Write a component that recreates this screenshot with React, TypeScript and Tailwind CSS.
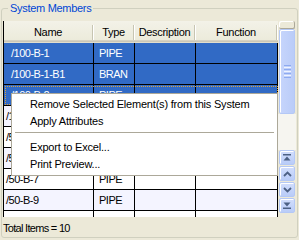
import React from "react";

type Row = { name: string; type: string; sel?: boolean; focus?: boolean };

const rows: Row[] = [
  { name: "/100-B-1", type: "PIPE", sel: true },
  { name: "/100-B-1-B1", type: "BRAN", sel: true },
  { name: "/100-B-2", type: "PIPE", sel: true, focus: true },
  { name: "/100-B-3", type: "PIPE" },
  { name: "/50-B-5", type: "PIPE" },
  { name: "/50-B-6", type: "PIPE" },
  { name: "/50-B-7", type: "PIPE" },
  { name: "/50-B-9", type: "PIPE" },
  { name: "/150-B-9", type: "PIPE" },
];

function ScrollBtn({ children }: { children: React.ReactNode }) {
  return (
    <div className="h-[15px] mb-[1px] mx-[1px] rounded-[2px] border border-[#B4C8F6] bg-gradient-to-b from-[#D2DEFC] to-[#B9CCF8] shadow-[inset_1px_1px_0_#ffffff] flex items-center justify-center">
      {children}
    </div>
  );
}

export default function App() {
  return (
    <div className="w-[299px] h-[240px] bg-[#ECE9D8] px-[1px] pt-[1px] overflow-hidden relative font-['Liberation_Sans',Arial,sans-serif] text-[11px] text-black">
      <fieldset className="m-0 p-0 px-[1px] min-w-0 h-[237px] border border-[#D0D0BF] rounded-[3px]">
        <legend className="ml-[5px] px-[2px] leading-[14px] tracking-[-0.3px] text-[#0046D5]">System Members</legend>

        {/* list */}
        <div className="mt-[6px] h-[196px] flex">
          <div className="w-[275px] shrink-0 border-l border-black flex flex-col">
            {/* header */}
            <div className="h-[22px] shrink-0 flex tracking-[-0.3px] bg-gradient-to-b from-[#F3F2E8] to-[#EBEAD9] shadow-[inset_0_-1px_0_#E2DECD,inset_0_-2px_0_#CBC7B8,inset_0_-3px_0_#D6D2C2]">
              {[
                ["Name", "w-[90px]"],
                ["Type", "w-[41px]"],
                ["Description", "w-[61px]"],
                ["Function", "w-[82px]"],
              ].map(([label, w]) => (
                <div key={label} className={`${w} shrink-0 flex items-center pt-[1px]`}>
                  <span className="flex-1 text-center whitespace-nowrap overflow-hidden">{label}</span>
                  <span className="w-px h-[15px] bg-[#C7C5B2]" />
                  <span className="w-px h-[15px] bg-white" />
                </div>
              ))}
            </div>
            {/* body */}
            <div className="flex-1 overflow-hidden tracking-[-0.5px]">
              {rows.map((r, i) => (
                <div
                  key={i}
                  className={`relative h-[21px] flex border-b border-black ${
                    r.sel ? "bg-[#316AC5] text-white" : i % 2 === 1 ? "bg-[#F4F4FF]" : "bg-white"
                  }`}
                >
                  <div
                    className={`w-[90px] shrink-0 border-r border-black flex items-center whitespace-nowrap overflow-hidden ${
                      r.sel ? "pl-[7px]" : "pl-[2px]"
                    }`}
                  >
                    {r.name}
                  </div>
                  <div className="w-[41px] shrink-0 border-r border-black flex items-center pl-[5px]">{r.type}</div>
                  <div className="w-[61px] shrink-0 border-r border-black" />
                  <div className="w-[82px] shrink-0 border-r border-black" />
                  {r.focus && (
                    <div className="absolute left-[1px] top-[1px] right-0 bottom-0 border border-dotted border-[#DDA23A]" />
                  )}
                </div>
              ))}
            </div>
          </div>

          {/* scrollbar */}
          <div className="w-[18px] shrink-0 flex flex-col">
            <div className="h-[8px] shrink-0 rounded-[2px] border-r border-b border-[#ACA899] bg-[#ECE9D8] shadow-[inset_1px_1px_0_#ffffff] mx-[1px]" />
            <div className="h-[85px] shrink-0 mx-[1px] rounded-[2px] border border-[#B4C8F6] bg-gradient-to-r from-[#C6D5FC] to-[#BACCF8] shadow-[inset_1px_1px_0_#ffffff] flex flex-col items-center justify-center gap-[1px]">
              <span className="w-[7px] h-px bg-[#8EAAF0]" />
              <span className="w-[7px] h-px bg-[#EEF3FF]" />
              <span className="w-[7px] h-px bg-[#8EAAF0]" />
              <span className="w-[7px] h-px bg-[#EEF3FF]" />
              <span className="w-[7px] h-px bg-[#8EAAF0]" />
              <span className="w-[7px] h-px bg-[#EEF3FF]" />
              <span className="w-[7px] h-px bg-[#8EAAF0]" />
            </div>
            <div className="flex-1 bg-[#F6F5F0]" />
            <ScrollBtn>
              <svg width="8" height="7" viewBox="0 0 8 7">
                <rect x="0" y="0" width="8" height="1.5" fill="#4D6185" />
                <path d="M0.5 6.5 L4 2.5 L7.5 6.5 Z" fill="#4D6185" />
              </svg>
            </ScrollBtn>
            <ScrollBtn>
              <svg width="9" height="6" viewBox="0 0 9 6">
                <path d="M1 5 L4.5 1.5 L8 5" stroke="#4D6185" strokeWidth="1.8" fill="none" />
              </svg>
            </ScrollBtn>
            <ScrollBtn>
              <svg width="9" height="6" viewBox="0 0 9 6">
                <path d="M1 1 L4.5 4.5 L8 1" stroke="#4D6185" strokeWidth="1.8" fill="none" />
              </svg>
            </ScrollBtn>
            <ScrollBtn>
              <svg width="8" height="7" viewBox="0 0 8 7">
                <path d="M0.5 0.5 L4 4.5 L7.5 0.5 Z" fill="#4D6185" />
                <rect x="0" y="5.5" width="8" height="1.5" fill="#4D6185" />
              </svg>
            </ScrollBtn>
            <div className="h-[3px]" />
          </div>
        </div>

        <div className="mt-[5px] leading-[13px] tracking-[-0.7px]">Total Items = 10</div>
      </fieldset>

      {/* context menu */}
      <div className="absolute left-[11px] top-[93px] w-[267px] bg-white border border-[#ACA899] py-[2px] tracking-[-0.2px]">
        <div className="h-[17px] flex items-center pl-[18px] whitespace-nowrap">Remove Selected Element(s) from this System</div>
        <div className="h-[17px] flex items-center pl-[18px]">Apply Attributes</div>
        <div className="h-[9px] pt-[2px]">
          <div className="mx-[3px] h-px bg-[#ACA899]" />
        </div>
        <div className="h-[17px] flex items-center pl-[18px]">Export to Excel...</div>
        <div className="h-[17px] flex items-center pl-[18px]">Print Preview...</div>
      </div>
    </div>
  );
}
